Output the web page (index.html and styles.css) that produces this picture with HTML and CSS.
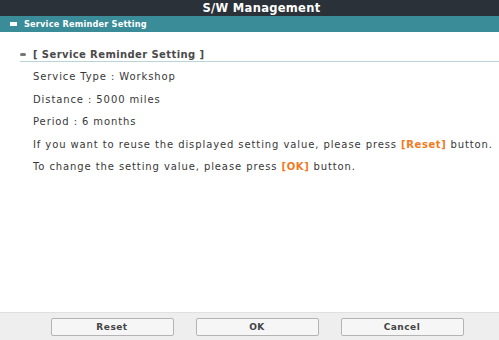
FILE: index.html
```html
<!DOCTYPE html>
<html lang="en">
<head>
  <meta charset="UTF-8" />
  <title>S/W Management</title>
  <link rel="stylesheet" href="styles.css">
</head>
<body>
  <div class="screen">
    <header class="title-bar">S/W Management</header>
    <div class="sub-bar">
      <span class="sub-icon"></span>
      <span>Service Reminder Setting</span>
    </div>

    <main class="content">
      <h2 class="section-title">
        <span class="bullet"></span>
        [ Service Reminder Setting ]
      </h2>
      <p>Service Type : Workshop</p>
      <p>Distance : 5000 miles</p>
      <p>Period : 6 months</p>
      <p>If you want to reuse the displayed setting value, please press <span class="hl">[Reset]</span> button.</p>
      <p>To change the setting value, please press <span class="hl">[OK]</span> button.</p>
    </main>

    <footer class="button-bar">
      <button>Reset</button>
      <button>OK</button>
      <button>Cancel</button>
    </footer>
  </div>
</body>
</html>
```

FILE: styles.css
```css
/* Basic Reset */
* {
  margin: 0;
  padding: 0;
  box-sizing: border-box;
  font-family: 'DejaVu Sans', sans-serif;
}

body {
  width: 499px;
  height: 340px;
  overflow: hidden;
  background-color: white;
}

.screen {
  display: flex;
  flex-direction: column;
  height: 340px;
}

/* Top bars */
.title-bar {
  height: 16px;
  background-color: #2b3139;
  color: white;
  font-size: 11.5px;
  font-weight: bold;
  letter-spacing: 0.3px;
  text-align: center;
  line-height: 16px;
  padding-left: 24px;
}

.sub-bar {
  height: 16px;
  background-color: #3a8c99;
  color: white;
  font-size: 8.2px;
  font-weight: bold;
  letter-spacing: 0.2px;
  display: flex;
  align-items: center;
  gap: 7px;
  padding-left: 10px;
}

.sub-icon {
  width: 7px;
  height: 4px;
  background-color: white;
}

/* Content */
.content {
  flex: 1;
  padding: 15px 0 0 20px;
}

.section-title {
  display: flex;
  align-items: center;
  gap: 7px;
  font-size: 10px;
  font-weight: bold;
  letter-spacing: 0.4px;
  color: #4a4a4a;
  height: 15px;
  border-bottom: 1px solid #b9d4d6;
  margin-bottom: 7px;
}

.bullet {
  width: 6px;
  height: 3px;
  border-radius: 2px;
  background-color: #777;
}

.content p {
  margin-left: 13px;
  font-size: 10px;
  letter-spacing: 0.9px;
  color: #383838;
  height: 22.5px;
  line-height: 16px;
  white-space: nowrap;
}

.hl {
  color: #f07a1e;
  font-weight: bold;
  letter-spacing: 0.6px;
}

/* Bottom buttons */
.button-bar {
  height: 28px;
  background-color: #eeeeee;
  border-top: 1px solid #e0e0e0;
  display: flex;
  justify-content: center;
  align-items: center;
  gap: 22px;
  padding-left: 15px;
}

.button-bar button {
  width: 123px;
  height: 18px;
  background-color: #f6f6f6;
  border: 1px solid #b4b4b4;
  border-radius: 2px;
  font-size: 9px;
  font-weight: bold;
  letter-spacing: 0.5px;
  color: #444;
}
```
